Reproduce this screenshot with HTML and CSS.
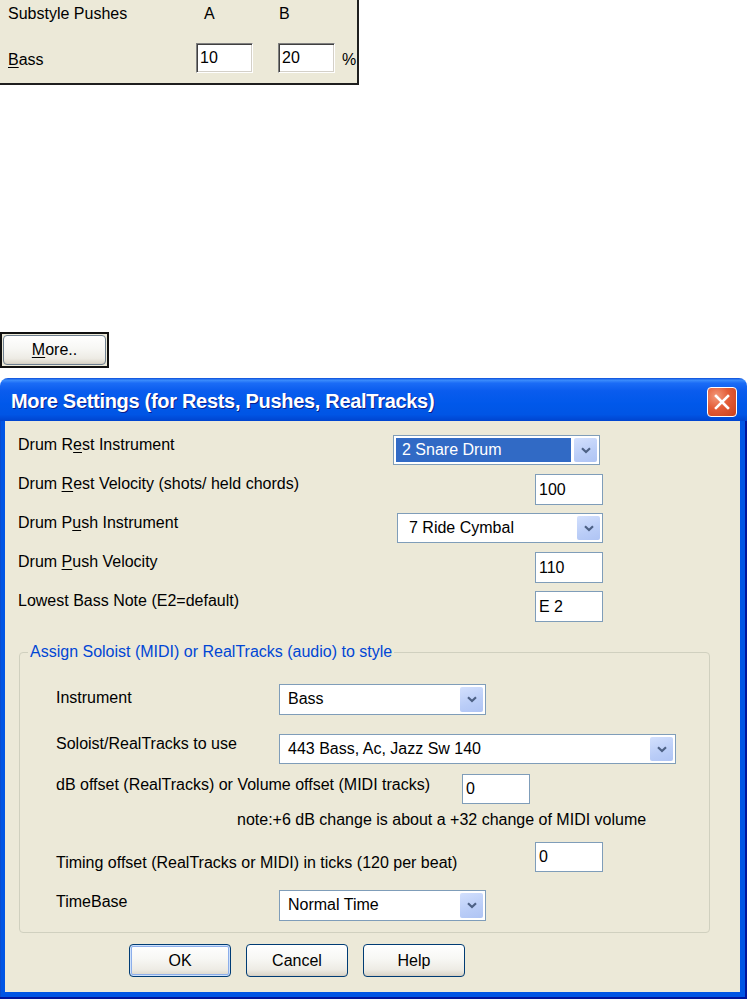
FILE: index.html
```html
<!DOCTYPE html>
<html lang="en">

<head>
    <meta charset="UTF-8">
    <meta name="viewport" content="width=device-width, initial-scale=1.0">
    <title>More Settings</title>
    <link rel="stylesheet" href="styles.css">
</head>

<body>
    <!-- substyle pushes panel -->
    <div class="panel">
        <span class="plabel">Substyle Pushes</span>
        <span class="col-a">A</span>
        <span class="col-b">B</span>
        <span class="pad"></span>
        <span class="plabel bass"><u>B</u>ass</span>
        <input class="sunken" type="text" value="10">
        <input class="sunken" type="text" value="20">
        <span class="pct">%</span>
    </div>

    <div class="more-box">
        <button class="xp-btn more"><u>M</u>ore..</button>
    </div>

    <!-- the dialog -->
    <div class="window">
        <div class="titlebar">
            <span class="title">More Settings (for Rests, Pushes, RealTracks)</span>
            <span class="close">
                <svg width="18" height="18" viewBox="0 0 18 18">
                    <path d="M3 3 L15 15 M15 3 L3 15" stroke="#fff" stroke-width="2.6" stroke-linecap="square" />
                </svg>
            </span>
        </div>
        <div class="frame">
            <div class="content">
                <div class="top-rows">
                    <span class="label">Drum R<u>e</u>st Instrument</span>
                    <div class="combo focus snare">
                        <span class="val">2 Snare Drum</span>
                        <span class="arrow"><svg width="10" height="7" viewBox="0 0 10 7"><path d="M1 1.2 L5 5 L9 1.2" fill="none" stroke="#4D6185" stroke-width="2.2" /></svg></span>
                    </div>

                    <span class="label">Drum <u>R</u>est Velocity (shots/ held chords)</span>
                    <input class="num" type="text" value="100">

                    <span class="label">Drum P<u>u</u>sh Instrument</span>
                    <div class="combo ride">
                        <span class="val">7 Ride Cymbal</span>
                        <span class="arrow"><svg width="10" height="7" viewBox="0 0 10 7"><path d="M1 1.2 L5 5 L9 1.2" fill="none" stroke="#4D6185" stroke-width="2.2" /></svg></span>
                    </div>

                    <span class="label">Drum <u>P</u>ush Velocity</span>
                    <input class="num" type="text" value="110">

                    <span class="label">Lowest Bass Note (E2=default)</span>
                    <input class="num" type="text" value="E 2">
                </div>

                <fieldset class="group">
                    <legend>Assign Soloist (MIDI) or RealTracks (audio) to style</legend>
                    <div class="group-rows">
                        <span class="label r-inst">Instrument</span>
                        <div class="combo short">
                            <span class="val">Bass</span>
                            <span class="arrow"><svg width="10" height="7" viewBox="0 0 10 7"><path d="M1 1.2 L5 5 L9 1.2" fill="none" stroke="#4D6185" stroke-width="2.2" /></svg></span>
                        </div>

                        <span class="label">Soloist/RealTracks to use</span>
                        <div class="combo long">
                            <span class="val">443 Bass, Ac, Jazz Sw 140</span>
                            <span class="arrow"><svg width="10" height="7" viewBox="0 0 10 7"><path d="M1 1.2 L5 5 L9 1.2" fill="none" stroke="#4D6185" stroke-width="2.2" /></svg></span>
                        </div>

                        <span class="label span2 r-db">dB offset (RealTracks) or Volume offset (MIDI tracks)</span>
                        <input class="num db" type="text" value="0">

                        <span class="note">note:+6 dB change is about a +32 change of MIDI volume</span>

                        <span class="label span3 r-timing">Timing offset (RealTracks or MIDI) in ticks (120 per beat)</span>
                        <input class="num timing" type="text" value="0">

                        <span class="label r-base">TimeBase</span>
                        <div class="combo short">
                            <span class="val">Normal Time</span>
                            <span class="arrow"><svg width="10" height="7" viewBox="0 0 10 7"><path d="M1 1.2 L5 5 L9 1.2" fill="none" stroke="#4D6185" stroke-width="2.2" /></svg></span>
                        </div>
                    </div>
                </fieldset>

                <div class="buttons">
                    <button class="xp-btn default">OK</button>
                    <button class="xp-btn">Cancel</button>
                    <button class="xp-btn">Help</button>
                </div>
            </div>
        </div>
    </div>
</body>

</html>
```

FILE: styles.css
```css
html,
body {
    overflow: hidden;
}

body {
    margin: 0;
    padding: 0;
    background-color: #fff;
    font-family: "Liberation Sans", Arial, sans-serif;
    font-size: 16px;
    color: #000;
}

input,
button {
    font-family: "Liberation Sans", Arial, sans-serif;
    font-size: 16px;
    color: #000;
}

u {
    text-decoration-thickness: 1px;
    text-underline-offset: 2px;
}

/* top panel */

.panel {
    width: 359px;
    height: 85px;
    box-sizing: border-box;
    background-color: #ECE9D8;
    border-right: 2px solid #1e1e1e;
    border-bottom: 2px solid #1e1e1e;
    display: grid;
    grid-template-columns: 196px 82px 64px auto;
    grid-template-rows: 20px 30px;
    row-gap: 19px;
    padding-top: 4px;
}

.plabel {
    padding-left: 8px;
    line-height: 20px;
}

.bass {
    align-self: center;
    padding-top: 3px;
}

.col-a {
    padding-left: 8px;
    line-height: 20px;
}

.col-b {
    padding-left: 1px;
    line-height: 20px;
}

.sunken {
    width: 57px;
    height: 30px;
    box-sizing: border-box;
    padding: 0 3px;
    border-top: 1px solid #808080;
    border-left: 1px solid #808080;
    border-right: 1px solid #fff;
    border-bottom: 1px solid #fff;
    box-shadow: inset 1px 1px 0 #404040, inset -1px -1px 0 #D4D0C8;
    background: #fff;
    outline: none;
}

.pct {
    align-self: center;
    line-height: 20px;
    padding-top: 3px;
}

/* More.. button */

.more-box {
    margin-top: 247px;
    width: 109px;
    height: 36px;
    box-sizing: border-box;
    border: 2px solid #111;
    background-color: #ECE9D8;
    padding: 1px;
}

.xp-btn {
    height: 33px;
    width: 102px;
    padding: 0;
    box-sizing: border-box;
    border: 1px solid #003C74;
    border-radius: 4px;
    background: linear-gradient(180deg, #FFFFFF 0%, #F7F7F4 45%, #EDEBE4 80%, #D8D3C6 100%);
    box-shadow: inset 0 -1px 0 #D6D0C5;
    cursor: pointer;
}

.xp-btn.more {
    width: 103px;
    height: 30px;
    border-color: #6E7F90;
}

.xp-btn.default {
    box-shadow: inset 0 0 0 1px #CEE1FB, inset 0 0 0 2px #8CAEEA;
}

/* window */

.window {
    margin-top: 10px;
    width: 747px;
}

.titlebar {
    height: 43px;
    border-radius: 8px 8px 0 0;
    background: linear-gradient(180deg, #0A4CD8 0%, #3B8CFC 5%, #1B6CF6 12%, #0A5CEE 30%, #0058EA 60%, #0055E5 85%, #0044CF 100%);
    display: flex;
    align-items: center;
    padding: 0 10px 0 11px;
    box-sizing: border-box;
}

.title {
    flex: 1;
    color: #fff;
    font-weight: bold;
    font-size: 20px;
    letter-spacing: -0.3px;
    text-shadow: 1px 1px 0 #0A1E8A;
    padding-top: 3px;
}

.close {
    width: 30px;
    height: 30px;
    box-sizing: border-box;
    border: 1px solid #fff;
    border-radius: 4px;
    background: radial-gradient(circle at 30% 30%, #F3997B 0%, #E35C37 45%, #C9401C 100%);
    display: flex;
    align-items: center;
    justify-content: center;
    margin-top: 5px;
}

.frame {
    background-color: #0055E5;
    padding: 0 7px 7px 5px;
    box-shadow: inset -2px -2px 0 #00159C, inset 1px 0 0 #0A4CD0;
}

.content {
    background-color: #ECE9D8;
    padding: 14px 0 14px 13px;
    height: 571px;
    box-sizing: border-box;
}

.label {
    line-height: 20px;
    white-space: nowrap;
}

.top-rows {
    display: grid;
    grid-template-columns: 375px 210px;
    grid-auto-rows: 39px;
    align-items: start;
}

.num {
    width: 68px;
    height: 31px;
    box-sizing: border-box;
    border: 1px solid #7F9DB9;
    padding: 0 3px;
    background: #fff;
    outline: none;
}

.top-rows .num {
    justify-self: end;
}

/* combo boxes */

.combo {
    display: flex;
    height: 30px;
    box-sizing: border-box;
    border: 1px solid #7F9DB9;
    background: #fff;
    padding: 2px;
}

.combo .val {
    flex: 1;
    line-height: 24px;
    padding-left: 6px;
    white-space: nowrap;
}

.combo .arrow {
    width: 23px;
    border-radius: 2px;
    background: linear-gradient(160deg, #D3E0FD 0%, #BACDF7 60%, #AFC4F4 100%);
    display: flex;
    align-items: center;
    justify-content: center;
}

.combo.focus .val {
    background-color: #316AC5;
    color: #fff;
    margin-right: 3px;
}

.snare {
    width: 207px;
}

.ride {
    width: 206px;
    justify-self: end;
}

.ride .val {
    padding-left: 9px;
}

/* group box */

.group {
    margin: 12px 0 0 1px;
    width: 691px;
    box-sizing: border-box;
    border: 1px solid #D0D0BF;
    border-radius: 4px;
    padding: 22px 0 12px 0;
}

.group legend {
    margin-left: 8px;
    padding: 0 2px;
    line-height: 20px;
    color: #0046D5;
}

.group-rows {
    margin-left: 36px;
    display: grid;
    grid-template-columns: 223px 183px 73px 1fr;
    grid-template-rows: 50px 40px 36px 32px 48px 30px;
    align-items: start;
}

.group-rows .label {
    grid-column: 1 / 2;
}

.group-rows .span2 {
    grid-column: 1 / 3;
}

.group-rows .span3 {
    grid-column: 1 / 4;
}

.r-inst {
    padding-top: 4px;
}

.r-db {
    padding-top: 1px;
}

.r-timing {
    padding-top: 11px;
}

.r-base {
    padding-top: 2px;
}

.short {
    grid-column: 2 / 5;
    justify-self: start;
    width: 207px;
    height: 31px;
}

.long {
    grid-column: 2 / 5;
    justify-self: start;
    width: 397px;
}

.num.db {
    grid-column: 3 / 4;
    height: 30px;
}

.num.timing {
    grid-column: 4 / 5;
    height: 30px;
}

.note {
    grid-column: 1 / 5;
    padding-left: 181px;
    line-height: 20px;
}

/* buttons */

.buttons {
    display: flex;
    gap: 15px;
    margin: 11px 0 0 111px;
}
```
